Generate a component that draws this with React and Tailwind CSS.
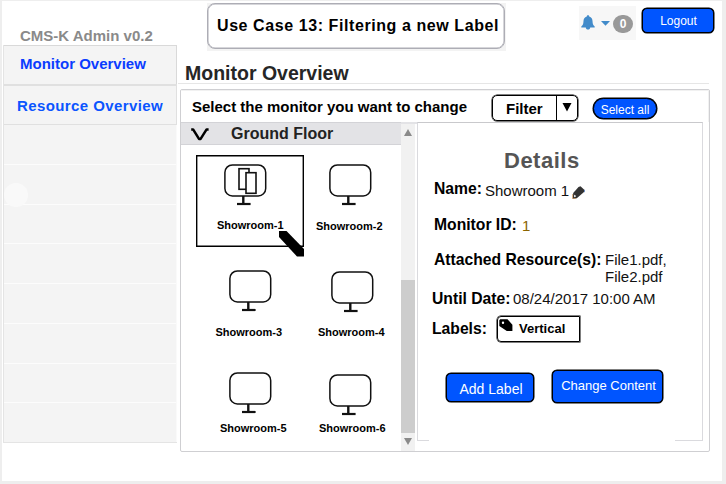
import React from "react";

const outline = "border border-black shadow-[0_0_0_0.5px_#000]";
const blueButton = "box-border bg-[#0055ff] text-white whitespace-nowrap " + outline;
const fieldLabel = "shrink-0 whitespace-nowrap text-[15.7px] leading-[18px] font-bold";
const fieldValue = "whitespace-nowrap text-[15px] leading-[18px] text-[#111]";

function MonitorIcon({ className, split }) {
  return (
    <svg className={"block shrink-0 " + className} width="44" height="43" viewBox="0 0 44 43" fill="none" stroke="#111">
      <rect x="0.9" y="0.9" width="40.8" height="31" rx="7.5" strokeWidth="1.5" />
      {split && (
        <g strokeWidth="1.6">
          <rect x="15" y="4.7" width="10" height="20.6" />
          <rect x="22" y="8.7" width="10" height="20.6" fill="#fff" />
        </g>
      )}
      <path d="M19.3 32v7.3" strokeWidth="2.4" />
      <path d="M13 40h13.6" strokeWidth="2.2" />
    </svg>
  );
}

function Monitor({ name, cell, icon, label, split, children }) {
  return (
    <div className={"box-border h-[92px] shrink-0 flex flex-col items-start " + cell}>
      <MonitorIcon className={icon} split={split} />
      <span className={"text-[11px] leading-3 font-bold whitespace-nowrap " + label}>{name}</span>
      {children}
    </div>
  );
}

function Sidebar() {
  return (
    <aside className="ml-px w-[174px] shrink-0 flex flex-col">
      <div className="mt-[27px] ml-[17px] text-[15px] leading-4 font-bold text-[#8a8a8a] whitespace-nowrap">CMS-K Admin v0.2</div>
      <nav className="relative mt-px h-[398px] flex flex-col bg-[#f4f4f4] border-l border-b border-[#e4e4e4]">
        <a className="box-border h-[39px] border-t border-r border-[#d9d9d9] pl-4 pt-[10px] text-[15px] leading-4 font-bold text-[#0a3cff] whitespace-nowrap">Monitor Overview</a>
        <a className="box-border h-[41px] border-t-2 border-b border-r border-[#e0e0e0] pl-[13px] pt-3 text-[15px] leading-4 font-bold tracking-[0.4px] text-[#0a55ff] whitespace-nowrap">Resource Overview</a>
        <div className="flex-1 flex flex-col divide-y divide-[#fcfcfc] border-r border-[#fafafa]">
          {[0, 1, 2, 3, 4, 5, 6, 7].map((i) => (
            <div key={i} className="flex-1" />
          ))}
        </div>
        <div className="absolute left-0 top-[138px] size-6 rounded-full bg-[#f9f9f9]" />
      </nav>
    </aside>
  );
}

function Header() {
  return (
    <header className="h-14 flex items-start">
      <div className="ml-[30px] mt-[2px] w-[299px] h-12 shrink-0 bg-[#f3f3f3]">
        <div className="box-border w-[298px] h-[46px] border border-[#adadb5] shadow-[inset_0_0_0_0.5px_#adadb5] rounded-[8px] bg-white pl-[9px] pt-[13px] text-[16px] leading-[18px] tracking-[0.58px] font-bold whitespace-nowrap">
          Use Case 13: Filtering a new Label
        </div>
      </div>
      <div className="ml-[73px] mt-[5px] w-[57px] h-[34px] shrink-0 flex items-start bg-[#f7f7f7]">
        <svg className="ml-[2px] mt-[9px]" width="14" height="16" viewBox="0 0 14 16" fill="#428bca">
          <path d="M7 .3c.8 0 1.200.5 1.200 1.200 2.300.6 3.200 2.300 3.300 4.500.1 3 .7 4.300 2.200 5.600v.9H.3v-.9C1.800 10.300 2.400 9 2.500 6 2.600 3.800 3.500 2.100 5.800 1.500 5.800.8 6.200.3 7 .3zM4.800 12.500h4.400c0 1.300-.9 2.100-2.200 2.100s-2.200-.8-2.200-2.100z" />
        </svg>
        <svg className="ml-[6px] mt-[15px]" width="9" height="5" viewBox="0 0 9 5" fill="#428bca">
          <path d="M0 0h9L4.500 4.700z" />
        </svg>
        <span className="ml-[3px] mt-[9px] w-[20px] h-[18px] rounded-full bg-[#999] text-center text-white text-[12px] leading-[18px] font-bold">0</span>
      </div>
      <button className={"ml-[6px] mt-[7px] w-[72px] h-[25px] shrink-0 rounded-[5px] pl-px text-[12px] leading-6 " + blueButton}>Logout</button>
    </header>
  );
}

function MonitorList() {
  return (
    <section className="w-[236px] shrink-0 flex">
      <div className="w-[220px] flex flex-col">
        <div className="box-border h-[23px] flex items-start bg-[#e3e3e6] border-y border-[#d3d3d7]">
          <svg className="ml-[10px] mt-[5px]" width="18" height="13" viewBox="0 0 18 13" fill="none" stroke="#000" strokeWidth="2.5" strokeLinejoin="round">
            <path d="M.2 1.400h1.900l5.900 9.500h1.600L15.600 1.400h2" />
          </svg>
          <span className="ml-[22px] mt-px text-[16px] leading-[20px] font-bold text-[#222] whitespace-nowrap">Ground Floor</span>
        </div>
        <div className="mt-[10px] ml-[15px] flex">
          <Monitor name="Showroom-1" split cell="relative w-[108px] border border-black shadow-[inset_0_0_0_0.4px_#000]" icon="ml-[27px] mt-[8px]" label="ml-[20px] mt-[12px]">
            <svg className="absolute left-[82px] top-[75px]" width="26" height="27" viewBox="0 0 26 27">
              <path d="M0 0h7.500L25 18v7.500h-7L0 6z" />
            </svg>
          </Monitor>
          <Monitor name="Showroom-2" cell="w-[97px]" icon="ml-[25px] mt-[9px]" label="ml-3 mt-[13px]" />
        </div>
        <div className="ml-[15px] flex">
          <Monitor name="Showroom-3" cell="w-[108px]" icon="ml-[33px] mt-[23px]" label="ml-[19.5px] mt-[13px]" />
          <Monitor name="Showroom-4" cell="w-[97px]" icon="ml-[27px] mt-6" label="ml-[14px] mt-3" />
        </div>
        <div className="ml-[15px] flex">
          <Monitor name="Showroom-5" cell="w-[108px]" icon="ml-[33px] mt-[33px]" label="ml-6 mt-[7px]" />
          <Monitor name="Showroom-6" cell="w-[97px]" icon="ml-[25px] mt-[35px]" label="ml-[15px] mt-[5px]" />
        </div>
      </div>
      <div className="w-[16px] flex flex-col">
        <div className="h-[2px] bg-[#e3e3e6]" />
        <div className="w-[14px] flex-1 flex flex-col items-center bg-[#f1f1f1]">
          <svg className="mt-[5px] shrink-0" width="8" height="7" viewBox="0 0 8 7" fill="#8a8a8a"><path d="M4 0l4 7H0z" /></svg>
          <div className="mt-[144px] h-[153px] w-full bg-[#cdcdcd]" />
          <svg className="mt-[5px] shrink-0" width="8" height="7" viewBox="0 0 8 7" fill="#8a8a8a"><path d="M4 7l4-7H0z" /></svg>
        </div>
      </div>
    </section>
  );
}

function Details() {
  return (
    <section className="box-border w-[286px] h-[319px] shrink-0 flex flex-col border-x border-t border-x-[#dadade] border-t-[#c9c9cc]">
      <h2 className="mt-[26px] ml-[86px] text-[22px] leading-6 tracking-[0.5px] font-bold text-[#555]">Details</h2>
      <div className="mt-[7px] ml-4 h-5 flex items-start">
        <span className={fieldLabel + " w-[51px]"}>Name:</span>
        <span className={fieldValue + " w-[87px] mt-[2px]"}>Showroom 1</span>
        <svg className="mt-[6px]" width="13" height="13" viewBox="0 0 13 13">
          <path d="M6.500 1L8.500.3 12.500 4 12 6 4.800 12.300.8 12.800 1.200 7z" fill="#333" />
          <path d="M2.200 8.800l1.300.5.3 1.500-1.700.4z" fill="#fff" />
          <path d="M.6 8v4.600h3.200" fill="none" stroke="#c98a4a" strokeWidth=".7" />
          <path d="M12.500 3.800v2.400" stroke="#5b83c4" strokeWidth=".8" />
        </svg>
      </div>
      <div className="mt-4 ml-4 h-[19px] flex items-start">
        <span className={fieldLabel + " w-[88px]"}>Monitor ID:</span>
        <span className="mt-px text-[15px] leading-[18px] text-[#8a6400]">1</span>
      </div>
      <div className="mt-4 ml-4 h-[34px] flex items-start">
        <span className={fieldLabel + " w-[171px]"}>Attached Resource(s):</span>
        <span className="text-[15px] leading-[17px] text-[#111]">File1.pdf,<br />File2.pdf</span>
      </div>
      <div className="mt-[5px] ml-[14px] h-[18px] flex items-start">
        <span className={fieldLabel + " w-[81px]"}>Until Date:</span>
        <span className={fieldValue}>08/24/2017 10:00 AM</span>
      </div>
      <div className="mt-2 ml-[14px] h-[26px] flex items-start">
        <span className={fieldLabel + " w-[65px] pt-1"}>Labels:</span>
        <div className={"box-border w-[83px] h-[26px] rounded-l-[4px] flex items-start " + outline}>
          <svg className="ml-px mt-[2px]" width="14" height="13" viewBox="0 0 14 13">
            <path fillRule="evenodd" d="M1.200.3H8.500L13.400 5.800V12H7.800L.3 7V1.200zM4 2.600a1.200 1.200 0 100 2.400 1.200 1.200 0 000-2.400z" />
          </svg>
          <span className="ml-[6px] mt-[4px] text-[13px] leading-4 font-bold">Vertical</span>
        </div>
      </div>
      <div className="mt-7 ml-7 flex items-start">
        <button className={"mt-[3px] w-[88px] h-[29px] rounded-[5px] pt-[3px] pl-[2px] text-[14px] leading-6 " + blueButton}>Add Label</button>
        <button className={"ml-[18px] w-[111px] h-[33px] rounded-[5px] pb-[2px] pl-[2px] text-[13px] leading-6 " + blueButton}>Change Content</button>
      </div>
      <div className="mt-auto flex justify-between">
        <div className="w-[11px] h-px bg-[#dadade]" />
        <div className="w-[27px] h-px bg-[#dadade]" />
      </div>
    </section>
  );
}

export default function App() {
  return (
    <div className="box-border w-[726px] h-[484px] overflow-hidden flex bg-white border-[#eeeeee] border-l-2 border-t border-r-4 border-b-[3px] text-black [font-family:'Liberation_Sans',Arial,sans-serif]">
      <Sidebar />
      <main className="w-[545px] shrink-0 flex flex-col">
        <Header />
        <h1 className="mt-[6px] ml-[8px] text-[19.5px] leading-5 font-bold text-[#262626] whitespace-nowrap">Monitor Overview</h1>
        <div className="ml-px w-[531px] h-px bg-[#e6e6e6]" />
        <div className="box-border ml-[3px] mt-[5px] w-[530px] h-[363px] flex flex-col rounded-[2px] border border-[#cfcfd2]">
          <div className="box-border h-8 flex items-start border-t border-r border-[#f1f1f1]">
            <span className="ml-[11px] mt-[7px] w-[300px] shrink-0 text-[15px] leading-[18px] font-bold whitespace-nowrap">Select the monitor you want to change</span>
            <div className={"box-border mt-[4px] w-[86px] h-[26px] shrink-0 flex rounded-[5px] " + outline}>
              <span className="w-[63px] pl-[13px] pt-px text-[15px] leading-6 font-bold">Filter</span>
              <span className="flex-1 border-l-[1.5px] border-black flex items-start">
                <svg className="ml-[5px] mt-[7px]" width="10" height="9" viewBox="0 0 10 9"><path d="M.5 0h9L5 8.500z" /></svg>
              </span>
            </div>
            <button className={"ml-[15px] mt-[7px] w-[64px] h-[21px] shrink-0 rounded-full pt-[2px] text-[12px] leading-[18px] " + blueButton}>Select all</button>
          </div>
          <div className="flex-1 flex items-start">
            <div className="self-stretch flex"><MonitorList /></div>
            <Details />
          </div>
        </div>
      </main>
    </div>
  );
}
